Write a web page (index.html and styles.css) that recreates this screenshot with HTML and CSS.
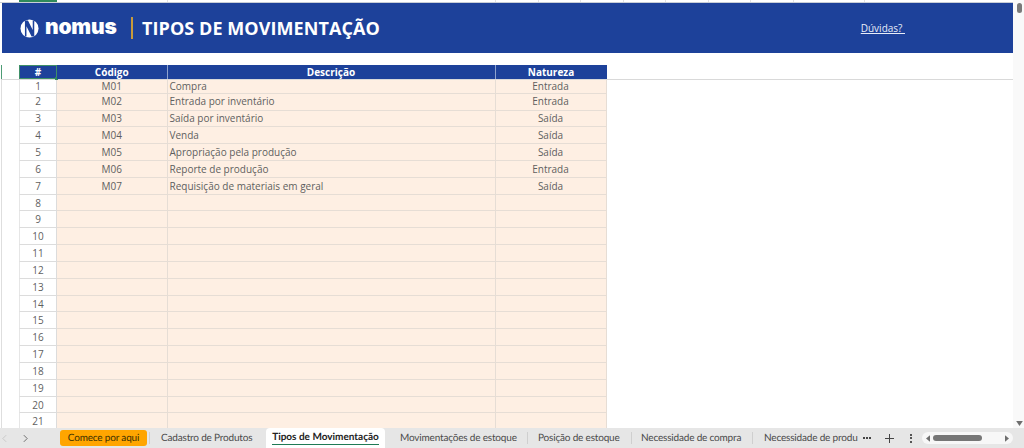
FILE: index.html
```html
<!DOCTYPE html>
<html lang="pt-BR">
<head>
<meta charset="utf-8">
<title>Tipos de Movimentação</title>
<link rel="stylesheet" href="styles.css">
</head>
<body>
<div class="app">
  <div class="main">
    <div class="content">
      <div class="strip">
        <span class="s s1"></span><span class="s s2"></span><span class="s s3"></span><span class="s s4"></span><span class="s s5"></span><span class="s s5"></span><span class="s s5"></span><span class="s s5"></span><span class="s s5"></span><span class="s s5"></span><span class="s s5"></span><span class="s s6"></span>
      </div>
      <header class="banner">
        <div class="logo">
          <svg class="logo-mark" viewBox="0 0 20 20" width="19" height="19" aria-hidden="true">
            <circle cx="10" cy="10" r="9.5" fill="#fff"/>
            <path d="M5.2 1.5h3.2l5 10V1.5h1.6v17h-2.8L6.8 7.5v11H5.2z" fill="#1d419a"/>
          </svg>
          <span class="logo-text">nomus</span>
        </div>
        <span class="divider"></span>
        <h1 class="title">TIPOS DE MOVIMENTAÇÃO</h1>
        <a class="help">Dúvidas? </a>
      </header>
      <div class="frozen">
        <div class="grid head">
          <div class="hc selected">#</div>
          <div class="hc">Código</div>
          <div class="hc">Descrição</div>
          <div class="hc">Natureza</div>
        </div>
      </div>
      <div class="rows">
        <div class="grid row first"><div class="c num">1</div><div class="c mid">M01</div><div class="c">Compra</div><div class="c mid">Entrada</div></div>
        <div class="grid row second"><div class="c num">2</div><div class="c mid">M02</div><div class="c">Entrada por inventário</div><div class="c mid">Entrada</div></div>
        <div class="grid row third"><div class="c num">3</div><div class="c mid">M03</div><div class="c">Saída por inventário</div><div class="c mid">Saída</div></div>
        <div class="grid row"><div class="c num">4</div><div class="c mid">M04</div><div class="c">Venda</div><div class="c mid">Saída</div></div>
        <div class="grid row"><div class="c num">5</div><div class="c mid">M05</div><div class="c">Apropriação pela produção</div><div class="c mid">Saída</div></div>
        <div class="grid row"><div class="c num">6</div><div class="c mid">M06</div><div class="c">Reporte de produção</div><div class="c mid">Entrada</div></div>
        <div class="grid row"><div class="c num">7</div><div class="c mid">M07</div><div class="c">Requisição de materiais em geral</div><div class="c mid">Saída</div></div>
        <div class="grid row"><div class="c num">8</div><div class="c"></div><div class="c"></div><div class="c"></div></div>
        <div class="grid row"><div class="c num">9</div><div class="c"></div><div class="c"></div><div class="c"></div></div>
        <div class="grid row"><div class="c num">10</div><div class="c"></div><div class="c"></div><div class="c"></div></div>
        <div class="grid row"><div class="c num">11</div><div class="c"></div><div class="c"></div><div class="c"></div></div>
        <div class="grid row"><div class="c num">12</div><div class="c"></div><div class="c"></div><div class="c"></div></div>
        <div class="grid row"><div class="c num">13</div><div class="c"></div><div class="c"></div><div class="c"></div></div>
        <div class="grid row"><div class="c num">14</div><div class="c"></div><div class="c"></div><div class="c"></div></div>
        <div class="grid row"><div class="c num">15</div><div class="c"></div><div class="c"></div><div class="c"></div></div>
        <div class="grid row"><div class="c num">16</div><div class="c"></div><div class="c"></div><div class="c"></div></div>
        <div class="grid row"><div class="c num">17</div><div class="c"></div><div class="c"></div><div class="c"></div></div>
        <div class="grid row"><div class="c num">18</div><div class="c"></div><div class="c"></div><div class="c"></div></div>
        <div class="grid row"><div class="c num">19</div><div class="c"></div><div class="c"></div><div class="c"></div></div>
        <div class="grid row"><div class="c num">20</div><div class="c"></div><div class="c"></div><div class="c"></div></div>
        <div class="grid row"><div class="c num">21</div><div class="c"></div><div class="c"></div><div class="c"></div></div>
      </div>
    </div>
    <aside class="vscroll">
      <span class="vthumb"></span>
      <svg class="vdown" viewBox="0 0 8 6" width="7" height="5" aria-hidden="true"><path d="M0 0h8L4 6z" fill="#6e6e6e"/></svg>
    </aside>
  </div>
  <nav class="tabbar">
    <div class="arrows">
      <svg viewBox="0 0 6 10" width="5" height="9" aria-hidden="true"><path d="M5 1 1 5l4 4" fill="none" stroke="#c4c4c4" stroke-width="1"/></svg>
      <svg viewBox="0 0 6 10" width="5" height="9" aria-hidden="true"><path d="m1 1 4 4-4 4" fill="none" stroke="#555" stroke-width="1"/></svg>
    </div>
    <div class="tabs">
      <span class="tab orange">Comece por aqui</span>
      <span class="sep"></span>
      <span class="tab t2">Cadastro de Produtos</span>
      <span class="tab active"><span class="active-label">Tipos de Movimentação</span></span>
      <span class="tab t4">Movimentações de estoque</span>
      <span class="sep"></span>
      <span class="tab t5">Posição de estoque</span>
      <span class="sep"></span>
      <span class="tab t6">Necessidade de compra</span>
      <span class="sep"></span>
      <span class="tab clipped">Necessidade de produ</span>
    </div>
    <div class="tools">
      <span class="dots"><i></i><i></i><i></i></span>
      <svg class="plus" viewBox="0 0 9 9" width="9" height="9" aria-hidden="true"><path d="M4.5 0v9M0 4.5h9" stroke="#444" stroke-width="1"/></svg>
      <span class="kebab"><i></i><i></i><i></i></span>
      <div class="hscroll">
        <svg viewBox="0 0 5 8" width="4" height="7" aria-hidden="true"><path d="M5 0v8L0 4z" fill="#6e6e6e"/></svg>
        <span class="hthumb"></span>
        <svg viewBox="0 0 5 8" width="4" height="7" aria-hidden="true"><path d="M0 0v8l5-4z" fill="#6e6e6e"/></svg>
      </div>
    </div>
  </nav>
</div>
</body>
</html>
```
FILE: styles.css
```css
* { box-sizing: border-box; }
html, body { margin: 0; height: 100%; overflow: hidden; background: #fff; }
body { font-family: "Open Sans", "Liberation Sans", sans-serif; color: #5f5f5f; }

.app { width: 1024px; height: 448px; display: flex; flex-direction: column; }
.main { flex: 1; min-height: 0; display: flex; }
.content { width: 1013px; min-width: 0; display: flex; flex-direction: column; }

.strip { height: 3px; flex: none; display: flex; border-bottom: 1px solid #c9ced6; }
.s { height: 2px; border-right: 1px solid #e2e2e2; }
.s1 { width: 19px; border-right: 0; }
.s2 { width: 38px; border-top: 2px solid #2f8a5b; border-right: 0; }
.s3 { width: 111px; }
.s4 { width: 328px; }
.s5 { width: 42.5px; }
.s6 { width: 71px; }

.banner {
  height: 50px; flex: none; margin-left: 2px; padding-left: 18px;
  background: #1d419a; display: flex; align-items: center; color: #fff;
}
.logo { display: flex; align-items: center; gap: 6px; width: 111px; }
.logo-mark { flex: none; }
.logo-text { font-family: Inter, "Open Sans", sans-serif; font-weight: 900; font-size: 21px; letter-spacing: -0.2px; line-height: 1; color: #fff; margin-bottom: 3px; }
.divider { width: 2px; height: 22px; background: #c79a3b; flex: none; }
.title { margin: 0 0 0 9px; font-size: 18px; font-weight: 700; letter-spacing: 0.07px; color: #fff; white-space: nowrap; }
.help { margin-left: auto; margin-right: 108px; font-size: 10px; color: #e8edf8; text-decoration: underline; white-space: pre; }

.grid { display: grid; grid-template-columns: 38px 110.5px 328px 111px; width: 587.5px; }

.frozen { height: 27px; flex: none; padding-top: 12px; border-bottom: 1px solid #d9d9d9; margin-left: 1px; position: relative; }
.frozen::before { content: ""; position: absolute; left: 0; top: 12px; width: 1px; height: 14px; background: #4d9c75; }
.frozen .grid { margin-left: 18px; }
.head { height: 14px; }
.hc {
  background: #1d419a; color: #fff; font-size: 10px; font-weight: 700; line-height: 14px;
  text-align: center; border-right: 1px solid #8ea3cf; position: relative;
}
.hc:last-child { border-right: 0; }
.selected { border: 1px solid #3f8f68; line-height: 12px; }
.selected::after { content: ""; position: absolute; right: -2px; bottom: -2px; width: 3px; height: 3px; background: #2f8a5b; }

.rows { flex: 1; min-height: 0; overflow: hidden; margin-left: 1px; border-left: 1px solid #dedede; }
.rows .grid { margin-left: 17px; }
.row { height: 16.83px; }
.row.first { height: 14px; }
.row.second { height: 16.5px; }
.c {
  background: #feefe3; border-right: 1px solid #e6ddd5; border-bottom: 1px solid #e6ddd5;
  font-size: 10px; line-height: 16px; padding-left: 2px; white-space: nowrap; overflow: hidden;
}
.first .c { line-height: 13px; }
.second .c { line-height: 14px; }
.third .c { line-height: 15px; }
.num { background: #fff; text-align: center; padding-left: 0; border-bottom-color: #dcdcdc; border-right-color: #dcdcdc; border-left: 1px solid #e6e6e6; }
.mid { text-align: center; padding-left: 0; }

.vscroll { flex: 1; position: relative; background: #f9f9f9; }
.vthumb { position: absolute; top: 3px; left: 4px; width: 5px; height: 10px; border-radius: 3px; background: #7a7a7a; }
.vdown { position: absolute; bottom: 2px; left: 3px; }

.tabbar { height: 20px; flex: none; background: #e6e6e6; display: flex; align-items: stretch; font-size: 10px; letter-spacing: -0.18px; color: #4a4a4a; font-family: Lato, "Liberation Sans", sans-serif; text-rendering: geometricPrecision; }
.arrows { width: 60px; flex: none; display: flex; align-items: center; gap: 16px; padding-left: 2px; }
.tabs { width: 802px; flex: none; display: flex; align-items: center; overflow: hidden; white-space: nowrap; }
.tab { flex: none; }
.sep { width: 1px; height: 12px; background: #cfcfcf; flex: none; }
.orange { width: 87px; height: 16px; margin-right: 2px; background: #ffa500; border-radius: 3px; color: #3c3000; text-align: center; line-height: 16px; }
.t2 { width: 91px; margin-left: 11px; margin-right: 14px; }
.active { width: 119px; height: 20px; background: #fff; border-radius: 4px 4px 0 0; text-align: center; color: #222; font-weight: 700; letter-spacing: 0; padding-top: 3px; }
.active-label { display: inline-block; line-height: 13px; border-bottom: 1.5px solid #1f7a55; }
.t4 { width: 117px; margin-left: 15px; margin-right: 10px; }
.t5 { width: 83px; margin-left: 10px; margin-right: 10px; }
.t6 { width: 100px; margin-left: 9px; margin-right: 11px; }
.clipped { margin-left: 11px; width: 92px; }

.tools { flex: 1; display: flex; align-items: center; padding-left: 1px; }
.dots { display: flex; gap: 1px; width: 22px; }
.dots i { width: 2px; height: 2px; background: #444; }
.plus { margin-right: 16px; }
.kebab { display: flex; flex-direction: column; gap: 1.5px; width: 12px; }
.kebab i { width: 2px; height: 2px; background: #555; }
.hscroll { width: 91px; height: 12px; background: #f7f7f7; border-radius: 6px; display: flex; align-items: center; padding-left: 4px; }
.hthumb { width: 49px; height: 6px; margin: 0 23px 0 3px; background: #767676; border-radius: 3px; }
```
